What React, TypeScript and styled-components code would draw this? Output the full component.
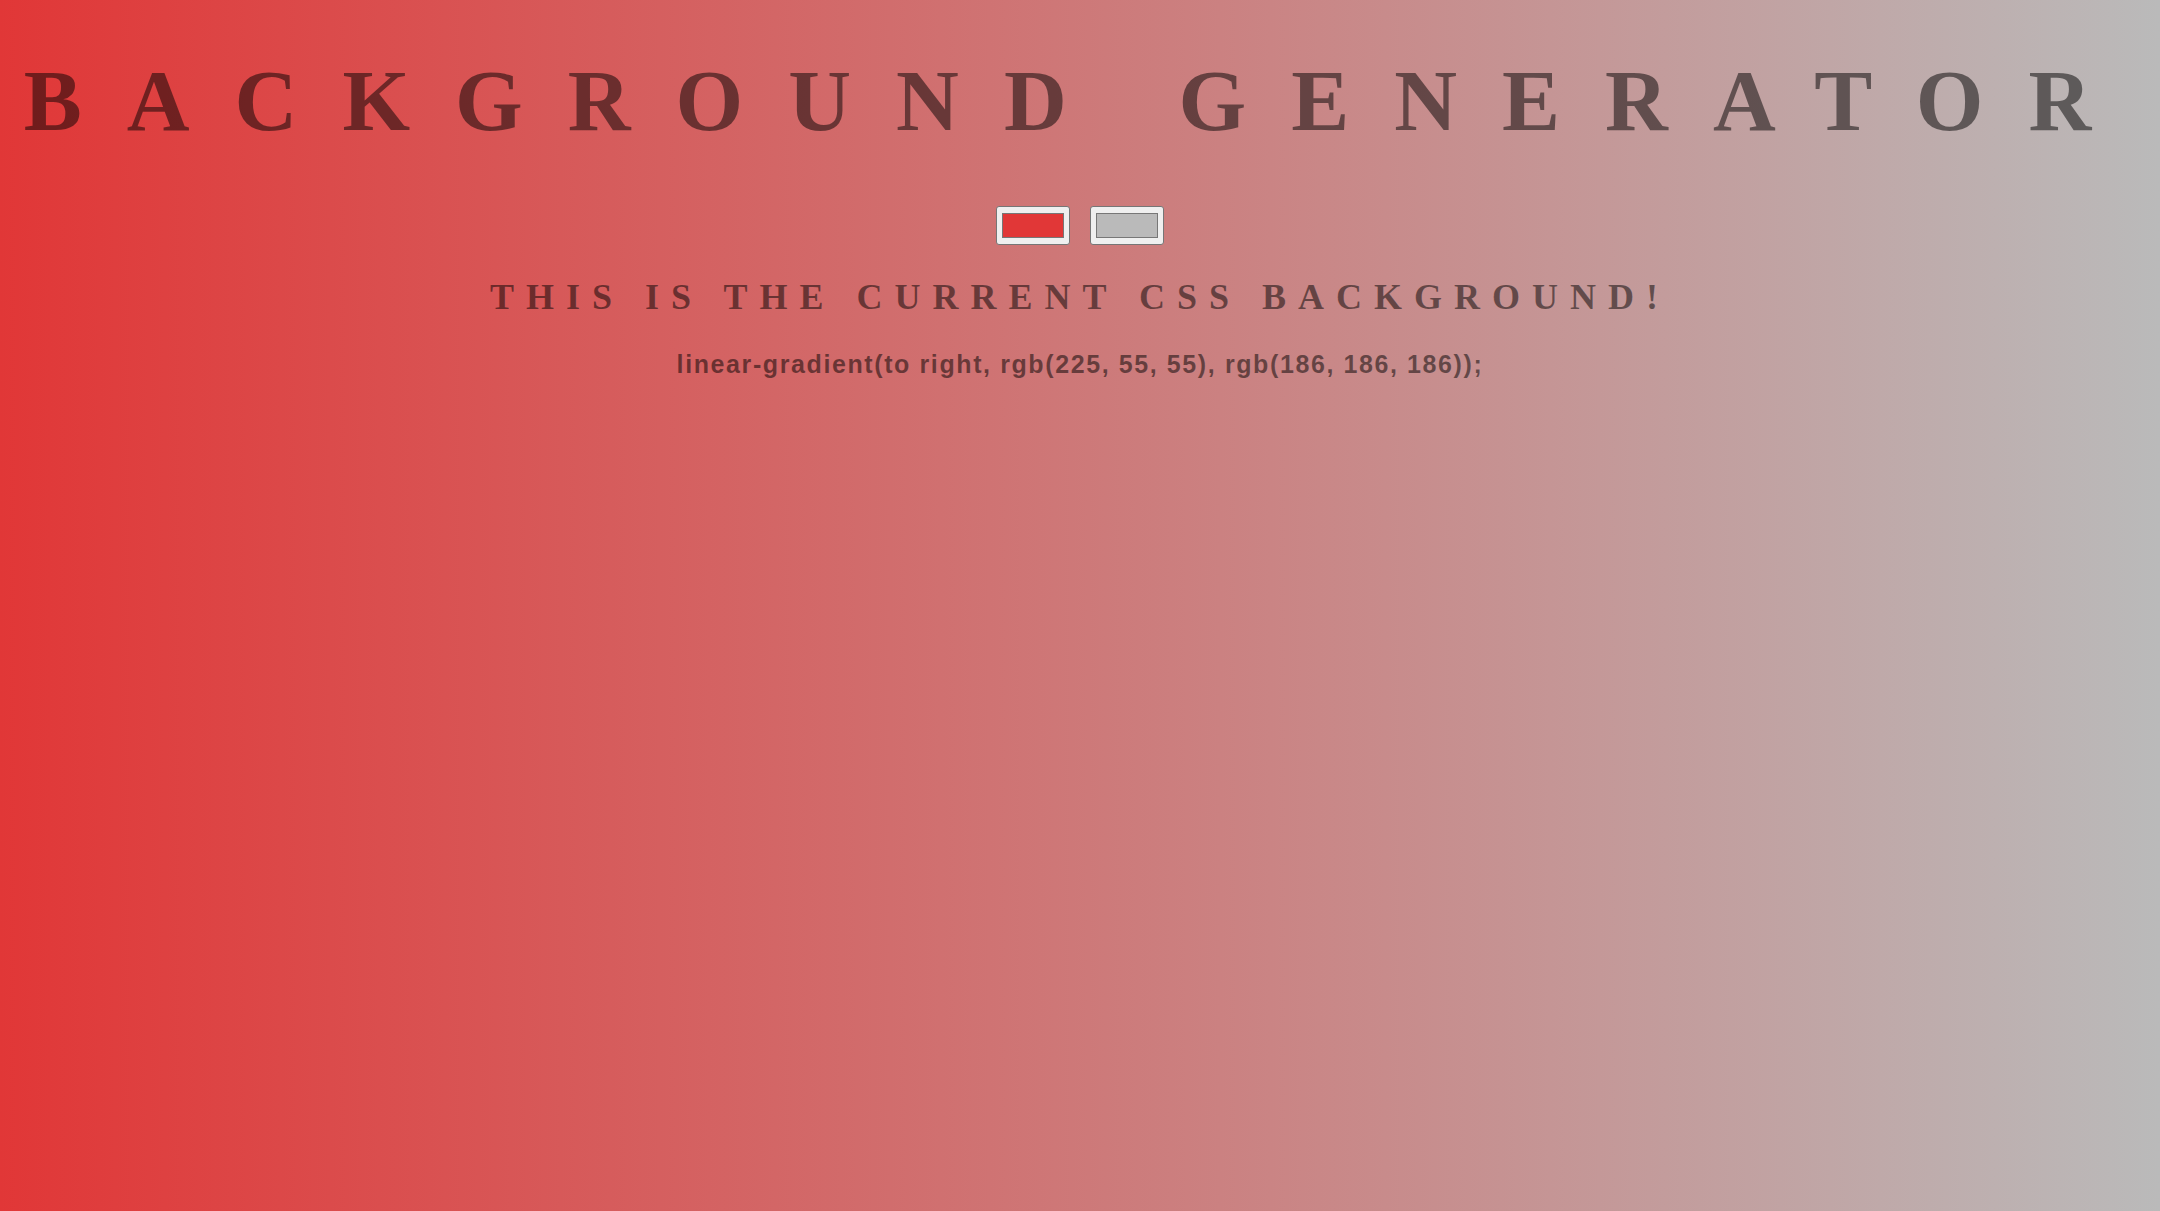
import styled, { createGlobalStyle } from 'styled-components';
import { useState } from 'react';

const GlobalStyle = createGlobalStyle`
  html, body {
    margin: 0;
    padding: 0;
  }
`

const Page = styled.main<{ $from: string; $to: string }>`
  box-sizing: border-box;
  min-height: 100vh;
  padding-top: 57px;
  display: flex;
  flex-direction: column;
  align-items: center;
  background: linear-gradient(to right, ${p => p.$from}, ${p => p.$to});
  color: rgba(0, 0, 0, 0.5);
`

const Title = styled.h1`
  margin: 0;
  font-family: "Liberation Serif", "Times New Roman", serif;
  font-weight: 700;
  font-size: 87px;
  line-height: 1;
  letter-spacing: 45px;
  text-align: center;
  white-space: nowrap;
`

const Pickers = styled.div`
  display: flex;
  gap: 20px;
  margin-top: 62px;
`

const ColorInput = styled.input.attrs({ type: 'color' })`
  box-sizing: border-box;
  width: 74px;
  height: 39px;
  margin: 0;
  padding: 0;
  border: 1.5px solid #767676;
  border-radius: 3px;
  background: #efefef;
  cursor: pointer;

  &::-webkit-color-swatch-wrapper {
    padding: 6px 5px;
  }
  &::-webkit-color-swatch {
    border: 1.5px solid #777;
    border-radius: 0;
  }
`

const Subtitle = styled.h3`
  margin: 34px 0 0;
  font-family: "Liberation Serif", "Times New Roman", serif;
  font-weight: 700;
  font-size: 36px;
  line-height: 1;
  letter-spacing: 12px;
  text-align: center;
`

const Code = styled.p`
  margin: 37px 0 0;
  font-family: "Liberation Sans", Arial, sans-serif;
  font-weight: 700;
  font-size: 25px;
  line-height: 1;
  letter-spacing: 1.6px;
  text-align: center;
`

const toRgb = (hex: string) => {
  const n = parseInt(hex.slice(1), 16);
  return `rgb(${(n >> 16) & 255}, ${(n >> 8) & 255}, ${n & 255})`;
}

const App = () => {
  const [color1, setColor1] = useState('#e13737');
  const [color2, setColor2] = useState('#bababa');

  return (
    <Page $from={color1} $to={color2}>
      <GlobalStyle />
      <Title>BACKGROUND GENERATOR</Title>
      <Pickers>
        <ColorInput name='color1' value={color1} onChange={e => setColor1(e.target.value)} />
        <ColorInput name='color2' value={color2} onChange={e => setColor2(e.target.value)} />
      </Pickers>
      <Subtitle>THIS IS THE CURRENT CSS BACKGROUND!</Subtitle>
      <Code>
        linear-gradient(to right, {toRgb(color1)}, {toRgb(color2)});
      </Code>
    </Page>
  )
}

export default App;
